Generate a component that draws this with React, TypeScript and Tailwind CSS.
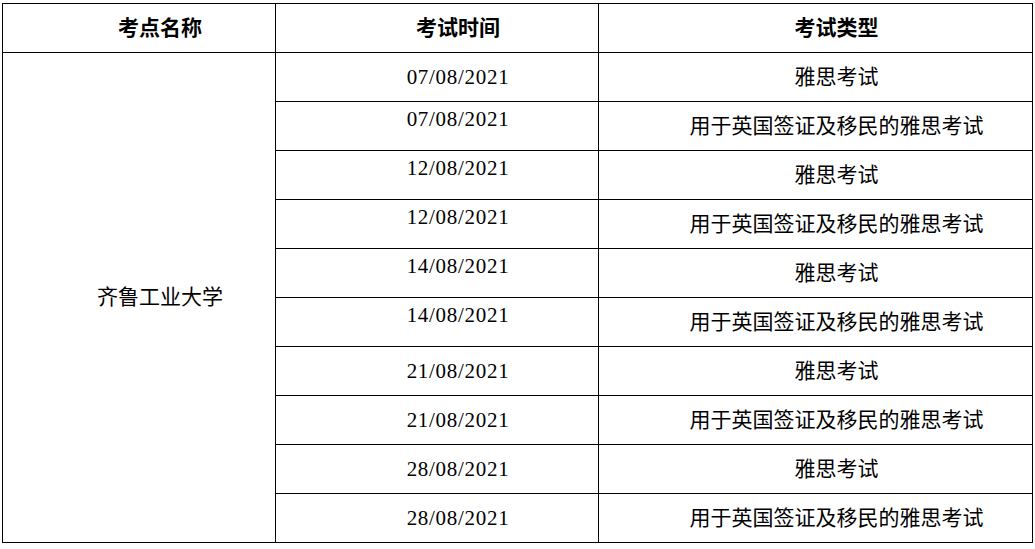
const rows = [
  { date: "07/08/2021", type: "雅思考试", up: false },
  { date: "07/08/2021", type: "用于英国签证及移民的雅思考试", up: true },
  { date: "12/08/2021", type: "雅思考试", up: true },
  { date: "12/08/2021", type: "用于英国签证及移民的雅思考试", up: true },
  { date: "14/08/2021", type: "雅思考试", up: true },
  { date: "14/08/2021", type: "用于英国签证及移民的雅思考试", up: true },
  { date: "21/08/2021", type: "雅思考试", up: false },
  { date: "21/08/2021", type: "用于英国签证及移民的雅思考试", up: false },
  { date: "28/08/2021", type: "雅思考试", up: false },
  { date: "28/08/2021", type: "用于英国签证及移民的雅思考试", up: false },
];

export default function App() {
  return (
    <div className="min-h-screen bg-white pt-[3px] pl-[2px] text-black font-['Noto_Sans_CJK_SC',sans-serif]">
      <table className="table-fixed border-collapse w-[1030px] text-[21px]">
        <colgroup>
          <col className="w-[273px]" />
          <col className="w-[323px]" />
          <col className="w-[434px]" />
        </colgroup>
        <thead>
          <tr>
            <th className="h-[49px] border border-black pl-[42px] pb-[4px] text-center font-bold leading-none">考点名称</th>
            <th className="h-[49px] border border-black pl-[42px] pb-[4px] text-center font-bold leading-none">考试时间</th>
            <th className="h-[49px] border border-black pl-[42px] pb-[4px] text-center font-bold leading-none">考试类型</th>
          </tr>
        </thead>
        <tbody>
          {rows.map((r, i) => (
            <tr key={i}>
              {i === 0 && (
                <td rowSpan={10} className="border border-black pl-[42px] pb-[4px] text-center align-middle leading-none">
                  齐鲁工业大学
                </td>
              )}
              {/* dates use a serif latin face */}
              <td
                className={
                  r.up
                    ? "h-[49px] border border-black pl-[42px] pb-[14px] text-center leading-none tracking-[0.7px] font-['Liberation_Serif',serif]"
                    : "h-[49px] border border-black pl-[42px] text-center leading-none tracking-[0.7px] font-['Liberation_Serif',serif]"
                }
              >
                {r.date}
              </td>
              <td className="h-[49px] border border-black pl-[42px] pb-[4px] text-center leading-none">{r.type}</td>
            </tr>
          ))}
        </tbody>
      </table>
    </div>
  );
}
